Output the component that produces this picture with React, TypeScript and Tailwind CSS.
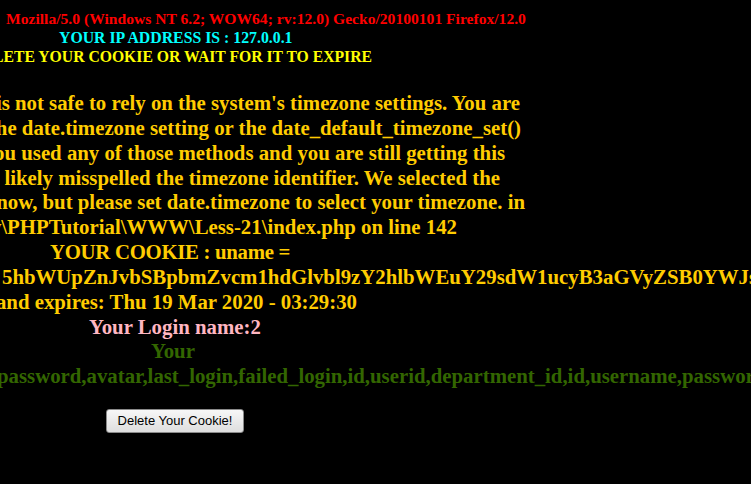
import React from 'react';

const serif = "font-['Liberation_Serif','Times_New_Roman',serif] font-bold whitespace-nowrap";

// lines of the PHP warning, anchored by their right edge (the left side runs off the page)
const warning: { text: string; right: string }[] = [
    { text: "Warning: date(): It is not safe to rely on the system's timezone settings. You are", right: 'w-[520px]' },
    { text: 'required* to use the date.timezone setting or the date_default_timezone_set()', right: 'w-[521px]' },
    { text: 'function. In case you used any of those methods and you are still getting this', right: 'w-[505px]' },
    { text: 'warning, you most likely misspelled the timezone identifier. We selected the', right: 'w-[500px]' },
    { text: "timezone 'UTC' for now, but please set date.timezone to select your timezone. in", right: 'w-[525px]' },
    { text: 'D:\\phpStudy\\PHPTutorial\\WWW\\Less-21\\index.php on line 142', right: 'w-[457px]' },
];

export default function App() {
    return (
        <div className="w-[751px] h-[484px] bg-black overflow-hidden">
            <div className="pt-[9px]">
                {/* Header */}
                <div className={`${serif} text-[15.6px] leading-[19px] text-[#ff0000] pl-[6px]`}>
                    Mozilla/5.0 (Windows NT 6.2; WOW64; rv:12.0) Gecko/20100101 Firefox/12.0
                </div>
                <div className={`${serif} text-[15.8px] leading-[19px] text-[#00ffff] pl-[59px]`}>
                    YOUR IP ADDRESS IS : 127.0.0.1
                </div>
                <div className={`${serif} text-[15.7px] leading-[19px] text-[#ffff00] flex justify-end w-[372px]`}>
                    <span className="shrink-0">DELETE YOUR COOKIE OR WAIT FOR IT TO EXPIRE</span>
                </div>

                {/* Warning + cookie */}
                <div className={`${serif} text-[20.8px] leading-[24.85px] text-[#ffcc00] mt-[25px]`}>
                    {warning.map((line) => (
                        <div key={line.text} className={`flex justify-end ${line.right}`}>
                            <span className="shrink-0">{line.text}</span>
                        </div>
                    ))}
                    <div className="pl-[50px] tracking-[-0.3px]">YOUR COOKIE : uname =</div>
                    <div className="pl-[2px]">
                        5hbWUpZnJvbSBpbmZvcm1hdGlvbl9zY2hlbWEuY29sdW1ucyB3aGVyZSB0YWJsZV9uYW1lPSd1c2VycycgIw==
                    </div>
                    <div className="flex justify-end w-[357px]">
                        <span className="shrink-0">and expires: Thu 19 Mar 2020 - 03:29:30</span>
                    </div>
                    <div className="pl-[89px] text-[#ffb6c1]">Your Login name:2</div>
                    <div className="pl-[151px] text-[#336600]">Your</div>
                    <div className="ml-[-3px] text-[#336600]">
                        password,avatar,last_login,failed_login,id,userid,department_id,id,username,password
                    </div>
                </div>

                {/* Delete button */}
                <div className="pl-[106px] pt-[18px]">
                    <button className="h-[24px] w-[138px] rounded-[3px] border border-[#8a8a8a] bg-gradient-to-b from-[#f7f7f7] to-[#dedede] text-[13px] text-black font-['Liberation_Sans',Arial,sans-serif]">
                        Delete Your Cookie!
                    </button>
                </div>
            </div>
        </div>
    );
}
